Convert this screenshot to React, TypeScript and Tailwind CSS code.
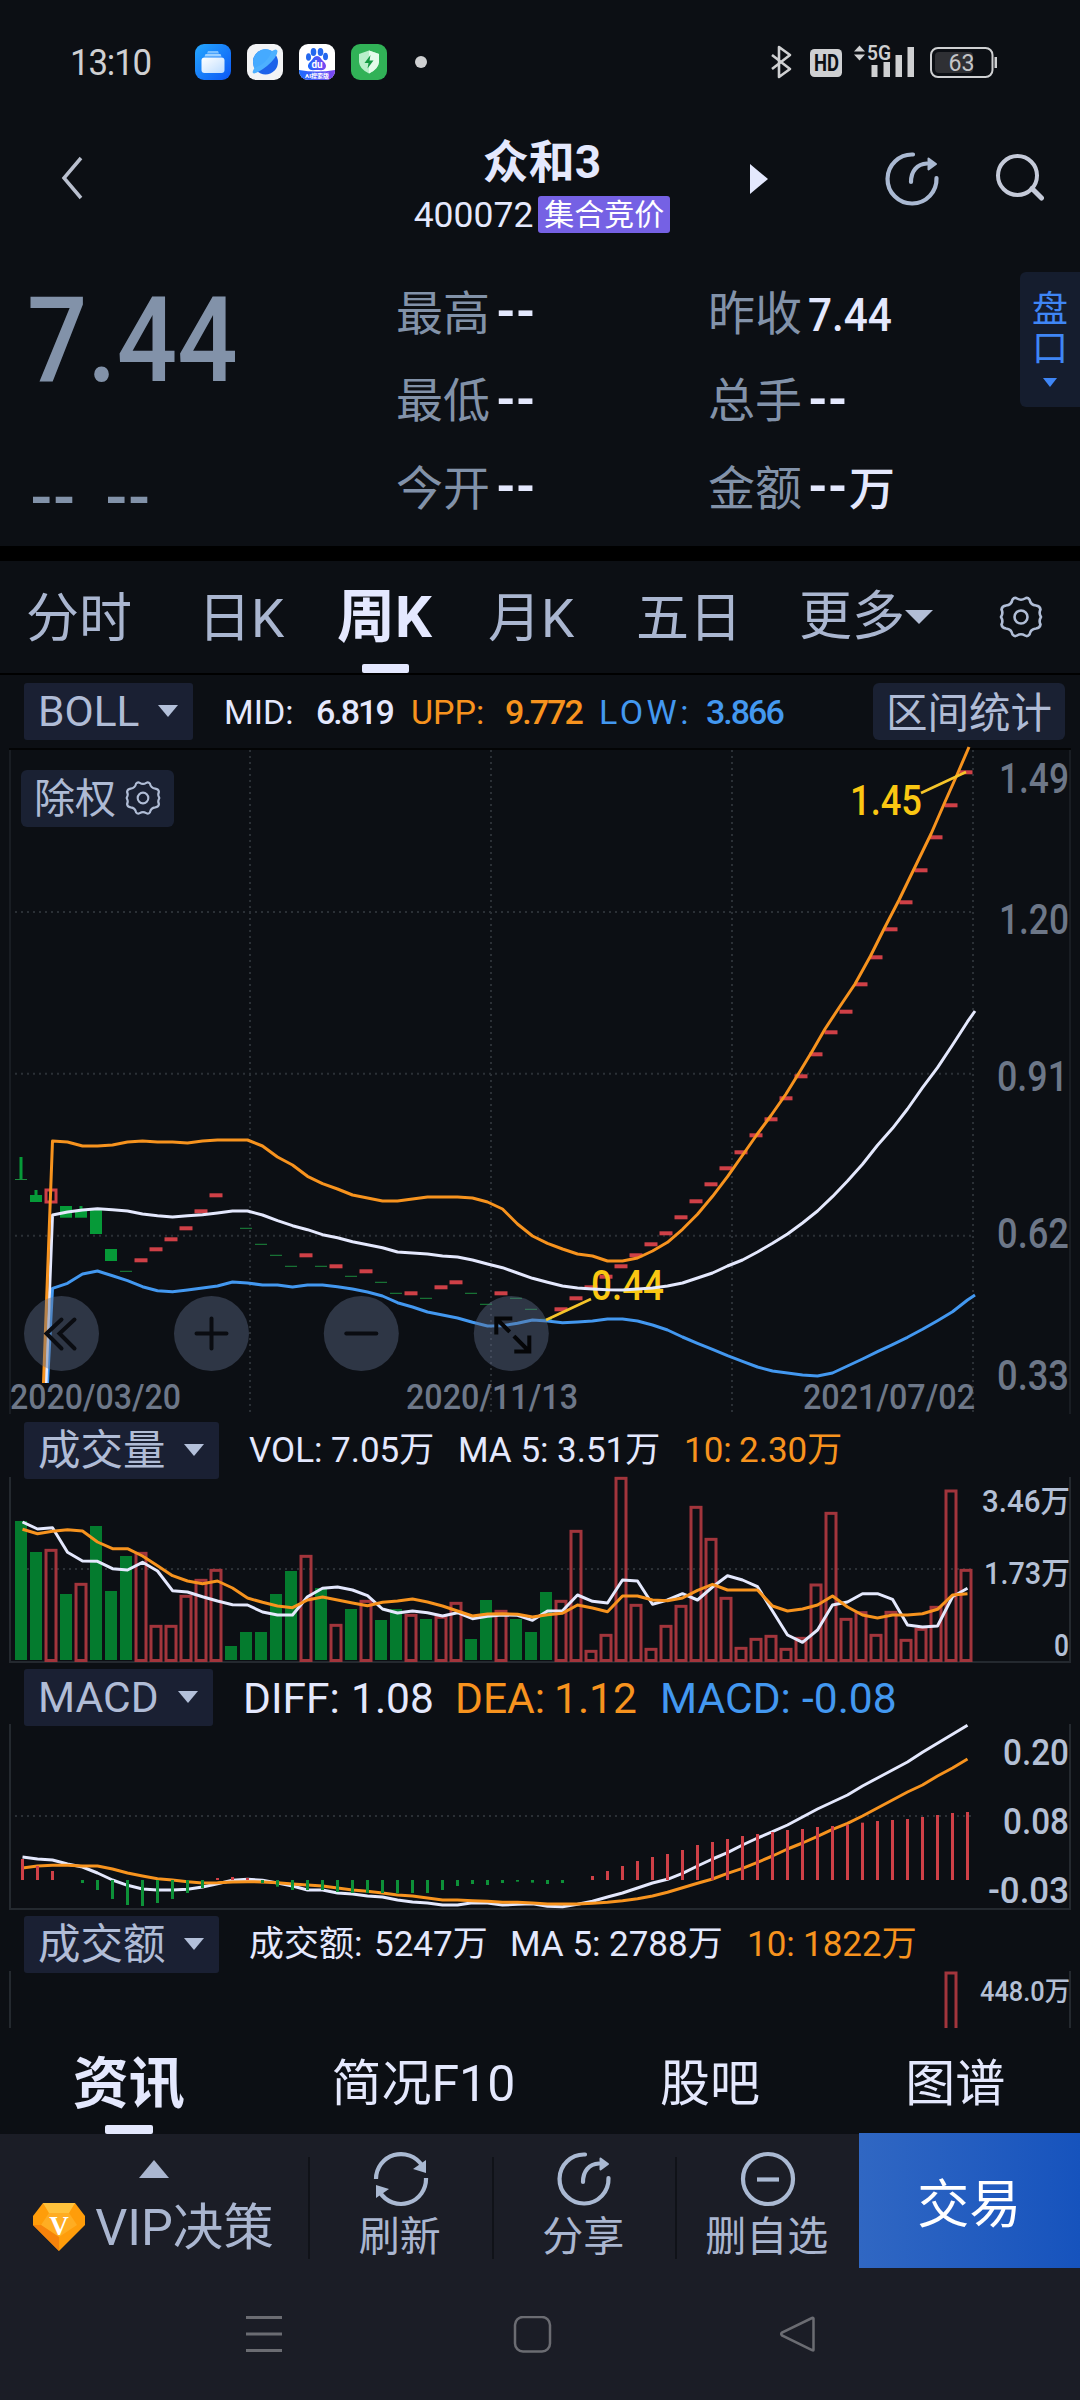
import type { ReactNode } from "react";

const STEP = 15;
const X0 = 21;

type Candle = { t: "r" | "g" | "wr" | "wg"; y: number; b?: number; w?: number };

// r / g are flat one-price weeks, wr / wg have a real body
const candles: (Candle | null)[] = [
  { t: "g", y: 1179.5, w: 1157 },
  { t: "wg", y: 1195, b: 1202, w: 1190 },
  { t: "wr", y: 1189, b: 1202 },
  { t: "wg", y: 1206, b: 1217.7 },
  { t: "wg", y: 1211, b: 1217.7, w: 1206 },
  { t: "wg", y: 1210, b: 1234 },
  { t: "wg", y: 1249, b: 1261 },
  { t: "g", y: 1271.3 },
  { t: "r", y: 1260.3 },
  { t: "r", y: 1249.3 },
  { t: "r", y: 1239.3 },
  { t: "r", y: 1228.3 },
  { t: "r", y: 1211.3 },
  { t: "r", y: 1195.3 },
  null,
  { t: "g", y: 1228.3 },
  { t: "g", y: 1244.3 },
  { t: "g", y: 1255.3 },
  { t: "g", y: 1266.3 },
  { t: "r", y: 1255.3 },
  { t: "g", y: 1266.3 },
  { t: "r", y: 1266.3 },
  { t: "g", y: 1276.3 },
  { t: "r", y: 1271.3 },
  { t: "g", y: 1282.3 },
  { t: "g", y: 1293.3 },
  { t: "r", y: 1293.3 },
  { t: "g", y: 1298.3 },
  { t: "r", y: 1287.3 },
  { t: "r", y: 1282.3 },
  { t: "g", y: 1293.3 },
  { t: "g", y: 1304.3 },
  { t: "r", y: 1293.3 },
  { t: "g", y: 1298.3 },
  { t: "g", y: 1309.3 },
  { t: "g", y: 1319.3 },
  ...[
    1309.3, 1298.3, 1287.3, 1276.7, 1266.3, 1255.3, 1244.3, 1233.3, 1217.3, 1201.3, 1184.3, 1168.3, 1152.3, 1135.3,
    1119.3, 1098.3, 1076.3, 1054.3, 1032.3, 1011.7, 984.3, 957.3, 929.3, 902.3, 870.3, 837.3, 805.3, 772.3,
  ].map((y) => ({ t: "r" as const, y })),
];

// Bollinger lines, thirds of a pixel below y = 1100
const upp = [
  123, 126, 138, 138, 135, 126, 123, 126, 126, 129, 123, 120, 120, 120, 138, 171, 195, 229, 251, 267, 285, 294, 303,
  303, 297, 291, 291, 291, 294, 306, 327, 372, 408, 430, 447, 462, 468, 483, 483, 474, 453, 427, 388, 343, 289, 230,
];
const mid = [
  345, 336, 330, 326, 329, 333, 342, 347, 351, 347, 344, 339, 333, 333, 345, 362, 377, 389, 404, 413, 425, 434, 443,
  456, 459, 462, 468, 471, 480, 492, 503, 519, 535, 547, 558, 564, 567, 569, 570, 567, 564, 558, 549, 534, 519, 498,
  480, 456, 430, 402, 369, 333, 290, 243, 193, 136, 85, 27, -37, -97, -165, -235,
];
const low = [
  565, 550, 522, 513, 527, 542, 560, 572, 575, 570, 564, 558, 546, 549, 555, 555, 561, 555, 555, 560, 567, 576, 588,
  608, 621, 636, 645, 654, 667, 678, 677, 670, 660, 663, 668, 666, 663, 657, 657, 663, 675, 690, 711, 730, 748, 767,
  784, 801, 813, 819, 825, 828, 819, 798, 777, 755, 734, 712, 688, 662, 635, 600,
];

const volumes =
  "333g 426g 418r 552g 520r 348g 543g 438g 427r 646r 646r 556r 508r 478r 708g 666g 666g 552g 483g 436r 534g 643r 597g 571r 630g 597g 613r 627g 619r 577r 687g 570g 601r 627g 666g 546g 571r 361r 721r 673r 202r 583r 715r 646r 586r 289r 385r 562r 712r 685r 676r 715r 682r 522r 307r 625r 605r 673r 604r 688r 655r 589r 240r 478r".split(
    " "
  );
const volMa5 = [
  336, 357, 353, 427, 453, 454, 476, 480, 457, 483, 542, 546, 560, 573, 584, 585, 606, 615, 615, 560, 535, 531, 540,
  557, 597, 609, 603, 608, 618, 608, 626, 619, 615, 616, 631, 603, 602, 555, 574, 579, 510, 513, 583, 570, 551, 570,
  531, 497, 510, 530, 603, 675, 697, 660, 585, 576, 551, 551, 568, 645, 651, 648, 560, 535,
];
const volMa10 = [
  358, 371, 364, 359, 363, 396, 416, 416, 438, 467, 497, 513, 521, 513, 534, 564, 577, 588, 593, 570, 561, 570, 579,
  587, 577, 573, 567, 576, 588, 603, 618, 612, 611, 613, 621, 614, 610, 585, 594, 605, 558, 558, 570, 572, 564, 541,
  523, 540, 540, 540, 588, 603, 597, 585, 558, 591, 615, 624, 615, 615, 611, 598, 555, 551,
];

const macdBars = [
  597, 618, 633, 660, 669, 690, 717, 735, 738, 729, 717, 699, 684, 654, 651, 654, 669, 680, 690, 690, 690, 696, 699,
  699, 699, 700, 699, 699, 690, 678, 672, 675, 669, 665, 668, 672, 669, 660, 648, 633, 618, 603, 591, 582, 570, 555,
  546, 537, 528, 522, 516, 510, 507, 501, 498, 494, 488, 483, 480, 477, 471, 465, 459, 456,
];
const diff = [
  591, 597, 600, 612, 621, 639, 660, 676, 687, 690, 690, 688, 681, 671, 661, 658, 661, 669, 678, 690, 690, 699, 702,
  708, 711, 720, 726, 729, 735, 735, 728, 729, 735, 733, 731, 739, 740, 733, 724, 711, 699, 684, 669, 658, 640, 618,
  597, 578, 555, 534, 515, 495, 471, 447, 426, 405, 378, 354, 330, 306, 277, 250, 223, 196,
];
const dea = [
  624, 618, 616, 616, 618, 618, 627, 639, 648, 656, 660, 665, 669, 668, 666, 665, 666, 668, 672, 675, 678, 684, 690,
  694, 699, 705, 708, 714, 720, 720, 722, 724, 727, 727, 729, 732, 732, 732, 730, 727, 722, 716, 708, 697, 683, 670,
  657, 640, 625, 607, 588, 567, 549, 529, 508, 490, 468, 444, 420, 396, 375, 348, 324, 297,
];

const line = (ys: number[], x0: number, base: number) =>
  ys.map((y, i) => `${x0 + i * STEP},${(base + y / 3).toFixed(1)}`).join(" ");

const RED = "#cf4047";
const GREEN = "#069a38";
const GRID = "#2b3036";
const WHITE = "#e4e8fd";
const ORANGE = "#f7931e";
const BLUE = "#4398f0";

const FONT = "'DIN Alternate', Roboto, 'Noto Sans CJK SC', sans-serif";

function Label({ x, x2, y, size, fill, children, weight = 500 }: {
  x: number; x2: number; y: number; size: number; fill: string; children: string; weight?: number;
}) {
  return (
    <text x={x} y={y} fontSize={size} fill={fill} fontWeight={weight} fontFamily={FONT} textLength={x2 - x} lengthAdjust="spacingAndGlyphs">
      {children}
    </text>
  );
}

function Caret({ className = "" }: { className?: string }) {
  return (
    <svg viewBox="0 0 20 12" className={`w-[20px] h-[12px] shrink-0 ${className}`}>
      <path d="M0 0h20L10 12z" fill="#b3c0da" />
    </svg>
  );
}

function Gear({ className }: { className: string }) {
  return (
    <svg viewBox="0 0 44 44" className={className} fill="none" stroke="#b0bdd6" strokeWidth="2.6" strokeLinejoin="round">
      <path d="M13.500 4.500Q15.500 2 18 3.500Q22 6 26 3.500Q28.500 2 30.500 4.500Q31.500 10 37 10.500Q41 11 41.500 14.500Q39.500 18 42 22Q39.500 26 41.500 29.500Q41 33 37 33.500Q31.500 34 30.500 39.500Q28.500 42 26 40.500Q22 38 18 40.500Q15.500 42 13.500 39.500Q12.500 34 7 33.500Q3 33 2.500 29.500Q4.500 26 2 22Q4.500 18 2.500 14.500Q3 11 7 10.500Q12.500 10 13.500 4.500Z" />
      <circle cx="22" cy="22" r="6.500" />
    </svg>
  );
}

function ShareIcon() {
  return (
    <svg viewBox="0 0 56 56" className="w-14 h-14" fill="none" stroke="#aab9d2" strokeWidth="4.200" strokeLinecap="round">
      <path d="M29 3.500A24.500 24.500 0 1 0 52.500 27" />
      <path d="M27 31C27 20 33 13 43 12.500" />
      <path d="M44.500 7.500L52 13L44.500 18.500z" fill="#aab9d2" strokeWidth="2" strokeLinejoin="round" />
    </svg>
  );
}

function StatusBar() {
  return (
    <div className="h-[124px] flex items-center pl-[70px] pr-[83px] text-[#cfd0d2]">
      <span className="w-[125px]">
        <span className="inline-block text-[37px] tracking-[-1.2px] leading-none mt-[2px] origin-left scale-x-[.94]">13:10</span>
      </span>
      <div className="flex gap-4 items-center">
        <svg viewBox="0 0 36 36" className="w-9 h-9">
          <defs>
            <linearGradient id="files" x1="0" y1="0" x2="1" y2="1"><stop stopColor="#25a8ff" /><stop offset="1" stopColor="#0b56f5" /></linearGradient>
            <linearGradient id="sheet" x1="0" y1="0" x2="1" y2="1"><stop stopColor="#fff" /><stop offset="1" stopColor="#bcdcff" /></linearGradient>
          </defs>
          <rect width="36" height="36" rx="9" fill="url(#files)" />
          <path d="M13 7h10l1 2.500H12z" fill="#7cc0ff" />
          <path d="M10.500 10h15l1 2.500h-17z" fill="#9cd0ff" />
          <rect x="6.500" y="13.500" width="23" height="15.500" rx="3" fill="url(#sheet)" />
        </svg>
        <svg viewBox="0 0 36 36" className="w-9 h-9">
          <rect width="36" height="36" rx="9" fill="#f2f3f5" />
          <circle cx="18.500" cy="18" r="12.500" fill="#1d62ea" />
          <path d="M28 9.500A12.500 12.500 0 0 0 6 18Q6 23 8.500 26Q22 22 28 9.500z" fill="#45aaff" />
          <path d="M25 7Q29.500 4 30.500 7Q30.500 13 20 22Q11 29 7 29.500Q4 29 7.500 24Q20 20 25 7z" fill="#4db0ff" />
        </svg>
        <svg viewBox="0 0 36 36" className="w-9 h-9">
          <defs>
            <linearGradient id="du"><stop stopColor="#1b6bff" /><stop offset="1" stopColor="#7d45f0" /></linearGradient>
            <clipPath id="duClip"><rect width="36" height="36" rx="9" /></clipPath>
          </defs>
          <g clipPath="url(#duClip)">
            <rect width="36" height="36" fill="#fff" />
            <g fill="#2468ee">
              <ellipse cx="14.500" cy="8" rx="2.800" ry="4" /><ellipse cx="21.500" cy="8" rx="2.800" ry="4" />
              <ellipse cx="9.500" cy="13" rx="2.500" ry="3.800" /><ellipse cx="26.500" cy="12.500" rx="2.500" ry="3.800" />
            </g>
            <path d="M18 12c3 0 4 3 6 5s4 4 2.500 7-5 2-8.500 2-7 1-8.500-2 .5-5 2.500-7 3-5 6-5z" fill="url(#du)" />
            <path d="M0 26Q18 29 36 26V36H0z" fill="url(#du)" />
            <text x="18" y="23.500" fontSize="10" fontWeight="700" fill="#fff" textAnchor="middle" fontFamily={FONT}>du</text>
            <text x="18" y="34" fontSize="6" fontWeight="700" fill="#fff" textAnchor="middle" fontFamily={FONT}>AI搜索版</text>
          </g>
        </svg>
        <svg viewBox="0 0 36 36" className="w-9 h-9">
          <rect width="36" height="36" rx="9" fill="#31b257" />
          <path d="M18 6.500L28 10V18Q27.500 25 18 29.500Q8.500 25 8 18V10z" fill="#b9f0cb" />
          <path d="M18 6.500L28 10V18Q27.500 25 18 29.500z" fill="#e3fbea" />
          <path d="M19.500 11L13.500 19H17.500L16.500 24.500L22.500 16.500H18.500z" fill="#139a42" />
        </svg>
      </div>
      <i className="ml-7 size-3 rounded-full bg-[#cfd0d2]" />
      <svg viewBox="770 44 228 36" className="ml-auto w-[228px] h-[36px] overflow-visible" fill="none">
        <path d="M773 55L791 69L780 77V47L791 55L773 69" stroke="#cfd0d2" strokeWidth="2.600" strokeLinejoin="round" />
        <rect x="811" y="49" width="32" height="28" rx="4.500" fill="#cfd0d2" />
        <text x="815" y="71" fontSize="23" fontWeight="700" fill="#0c0f14" fontFamily={FONT} textLength="25" lengthAdjust="spacingAndGlyphs">HD</text>
        <path d="M855 51.500l5.500-6 5.500 6zM855 54.500l5.500 6 5.500-6z" fill="#cfd0d2" />
        <text x="868" y="60" fontSize="21" fontWeight="600" fill="#cfd0d2" fontFamily={FONT} textLength="24" lengthAdjust="spacingAndGlyphs">5G</text>
        <path d="M872.500 65h6v12h-6zM884.500 62h6.500v15h-6.500zM896.500 55h6.500v22h-6.500zM908.500 47h6.500v30h-6.500z" fill="#cfd0d2" />
        <rect x="932" y="48" width="61.500" height="29" rx="7" stroke="#cfd0d2" strokeWidth="2" />
        <rect x="936" y="52" width="38" height="21" rx="4" fill="#2f3034" />
        <rect x="995.500" y="57" width="2.500" height="11" fill="#cfd0d2" />
        <text x="949.500" y="71" fontSize="24" fill="#c4c5c7" fontFamily={FONT} textLength="26" lengthAdjust="spacingAndGlyphs">63</text>
      </svg>
    </div>
  );
}

function Header() {
  return (
    <div className="h-[136px] flex items-start">
      <svg viewBox="0 0 22 44" className="w-[22px] h-[44px] ml-[61px] mt-8" fill="none" stroke="#b9bfce" strokeWidth="3.500">
        <path d="M20 2L3 22L20 42" />
      </svg>
      <div className="ml-[329px] w-[260px] mt-[14px] flex flex-col items-center text-[#e4e8fd]">
        <h1 className="text-[46px] leading-[48px] font-bold">众和3</h1>
        <div className="flex items-center gap-[5px] mt-[10px]">
          <span className="text-[35.500px] leading-[36px]">400072</span>
          <span className="bg-[#7561e4] rounded-[3px] w-[132px] h-[37px] text-center text-[30px] leading-[37px] text-white">集合竞价</span>
        </div>
      </div>
      <svg viewBox="0 0 18 30" className="w-[18px] h-[30px] ml-[78px] mt-10"><path d="M0 0L18 15L0 30z" fill="#e4e8fd" /></svg>
      <div className="ml-[116px] mt-[27px]"><ShareIcon /></div>
      <svg viewBox="0 0 50 50" className="w-[50px] h-[50px] ml-[54px] mt-7" fill="none" stroke="#c5cad9" strokeWidth="4">
        <circle cx="23.500" cy="23.500" r="19.500" /><path d="M38 36.500L47.500 46" strokeWidth="5" strokeLinecap="round" />
      </svg>
    </div>
  );
}

const quotes = [
  ["最高", "--", "昨收", "7.44"],
  ["最低", "--", "总手", "--"],
  ["今开", "--", "金额", "--万"],
];

function Value({ v }: { v: string }) {
  const dash = v.startsWith("--");
  return (
    <span className="ml-[6px] flex items-center font-medium text-[#e4e8fd]">
      {dash && <b className="w-[41px] -mt-[3px] text-[50px] leading-none font-bold">--</b>}
      {dash && <span className="text-[46px] leading-none">{v.slice(2)}</span>}
      {!dash && <span className="inline-block text-[47px] leading-none mt-[2px] origin-left scale-x-[.9]">{v}</span>}
    </span>
  );
}

function Quote() {
  return (
    <div className="h-[286px] flex">
      <div className="w-[396px] pl-[27px] text-[#8292a9]">
        <div className="mt-[22px] text-[118px] leading-[118px] font-medium origin-left scale-x-[.9] w-[260px]">7.44</div>
        <div className="mt-[60px] ml-[3px] text-[62px] leading-[76px] font-semibold flex gap-[29px]">
          <span className="w-[46px]">--</span>
          <span className="w-[46px]">--</span>
        </div>
      </div>
      <div className="w-[624px] pt-[10px] whitespace-nowrap">
        {quotes.map((q) => (
          <div key={q[0]} className="h-[87.500px] grid grid-cols-[312px_312px] items-center text-[47px] text-[#8292a9]">
            <div className="flex items-center">{q[0]}<Value v={q[1]} /></div>
            <div className="flex items-center">{q[2]}<Value v={q[3]} /></div>
          </div>
        ))}
      </div>
      <div className="mt-3 w-[60px] h-[135px] rounded-l-md bg-[#151d2e] flex flex-col items-center pt-[19px] text-[#3f86f5] text-[36px] leading-[39px]">
        <span>盘</span>
        <span>口</span>
        <svg viewBox="0 0 14 9" className="w-[14px] h-[9px] mt-[9px]"><path d="M0 0h14L7 9z" fill="#3f86f5" /></svg>
      </div>
    </div>
  );
}

const periods = [
  { name: "分时", pos: "w-[172px]" },
  { name: "日K", pos: "w-[139px]" },
  { name: "周K", pos: "w-[151px]", active: true },
  { name: "月K", pos: "w-[148px]" },
  { name: "五日", pos: "w-[163px]" },
];

function Periods() {
  return (
    <div className="h-[114px] border-b-2 border-black flex pl-[26px] text-[53px] leading-[117px] text-[#aab6d0]">
      {periods.map((p) => (
        <div key={p.name} className={`${p.pos} h-[112px] relative whitespace-nowrap`}>
          {p.active ? <b className="text-[#e4e8ff] text-[58px] leading-[112px]">{p.name}</b> : p.name}
          {p.active && <i className="absolute left-[25px] bottom-0 w-[47px] h-[9px] rounded-[2px] bg-[#e4e8ff]" />}
        </div>
      ))}
      <div className="h-[112px] flex items-center whitespace-nowrap">
        更多
        <svg viewBox="0 0 28 14" className="w-[28px] h-[14px]"><path d="M0 0h28L14 14z" fill="#b3bed6" /></svg>
      </div>
      <Gear className="w-[44px] h-[44px] ml-[66px] mt-[34px]" />
    </div>
  );
}

function Picker({ name, className }: { name: string; className: string }) {
  return (
    <div className={`h-[57px] rounded-[3px] bg-[#1a2033] flex items-center justify-between pl-[14px] pr-[15px] text-[42.500px] leading-[61px] text-[#b0bcd6] ${className}`}>
      <span>{name}</span>
      <Caret className="-mt-[1px]" />
    </div>
  );
}

type Item = { text: string; cls: string };

function Legend({ items, className = "" }: { items: Item[]; className?: string }) {
  return (
    <div className={`flex whitespace-nowrap pt-[2px] ${className}`}>
      {items.map((it, i) => (
        <span key={i} className={`shrink-0 ${it.cls}`}>{it.text}</span>
      ))}
    </div>
  );
}

function RoundButton({ x, children }: { x: number; children: ReactNode }) {
  return (
    <g transform={`translate(${x} 1333.500)`} fill="none" stroke="#0a0c11" strokeWidth="4" strokeLinecap="round">
      <circle r="37.500" fill="#5f6e8b" fillOpacity=".42" stroke="none" />
      {children}
    </g>
  );
}

function PriceChart() {
  return (
    <svg viewBox="0 748 1080 674" className="block w-[1080px] h-[674px] overflow-visible">
      <path d="M9 749H1071" stroke="#030405" strokeWidth="2" />
      <path d="M10 750V1414M1070 750V1414" stroke="#191d23" strokeWidth="2" />
      <g stroke={GRID} strokeWidth="2">
        <path d="M15 912H973M15 1073.700H973M15 1235.700H973" strokeDasharray="2 4" />
        <path d="M250 750V1412M491 750V1412M732 750V1412M973 750V1412" strokeDasharray="2 4" />
      </g>
      {candles.map((c, i) => {
        if (!c) return null;
        const x = X0 + i * STEP;
        const wick = c.w ? <path d={`M${x} ${c.w}V${c.y}`} stroke={GREEN} strokeWidth="3" /> : null;
        if (c.t === "r") return <rect key={i} x={x - 6.5} y={c.y - 2} width="13" height="4" fill={RED} />;
        if (c.t === "g") return <g key={i}>{wick}<rect x={x - 6} y={c.y - 0.5} width="12" height="1" fill="#1c8a3e" /></g>;
        if (c.t === "wr") return <rect key={i} x={x - 5} y={c.y + 1} width="10" height={c.b! - c.y - 1} fill="none" stroke={RED} strokeWidth="3" />;
        return <g key={i}>{wick}<rect x={x - 6} y={c.y} width="12" height={c.b! - c.y} fill={GREEN} /></g>;
      })}
      <Label x={850} x2={922} y={815} size={42} fill="#fac712">1.45</Label>
      <Label x={591} x2={664} y={1300} size={42} fill="#fac712">0.44</Label>
      <g fill="none" strokeWidth="3" strokeLinejoin="round">
        <polyline stroke={BLUE} points={`47.500,1383 ${line(low, 52.5, 1100)} 975,1295`} />
        <polyline stroke={WHITE} points={`46,1383 ${line(mid, 52.5, 1100)} 975,1011`} />
        <polyline stroke={ORANGE} points={`43.500,1383 ${line(upp, 52.5, 1100)} 742,1156 757,1134.500 771,1115.500 786,1094 799,1073 812,1051.500 825,1029 839.500,1007 855,984 870.500,956 884.500,928 899,900 914.500,868 931,834 944.500,803 956.500,776 969,747`} />
        <path d="M921 793L966 772M546 1320L591 1299" stroke="#f5c52a" strokeWidth="2.700" />
      </g>
      <Label x={999} x2={1069} y={793} size={42} fill="#6d7788">1.49</Label>
      <Label x={999} x2={1069} y={934} size={42} fill="#6d7788">1.20</Label>
      <Label x={997} x2={1068} y={1091} size={42} fill="#6d7788">0.91</Label>
      <Label x={997} x2={1069} y={1248} size={42} fill="#6d7788">0.62</Label>
      <Label x={997} x2={1069} y={1390} size={42} fill="#6d7788">0.33</Label>
      <Label x={10} x2={181} y={1409} size={35} fill="#6d7788">2020/03/20</Label>
      <Label x={406} x2={578} y={1409} size={35} fill="#6d7788">2020/11/13</Label>
      <Label x={803} x2={975} y={1409} size={35} fill="#6d7788">2021/07/02</Label>
      <RoundButton x={61.5}><path d="M0 -14L-15 0L0 15M13 -14L-2 0L13 15" /></RoundButton>
      <RoundButton x={211.5}><path d="M-15 0H15M0 -15V15" /></RoundButton>
      <RoundButton x={361.3}><path d="M-15 0H15" /></RoundButton>
      <RoundButton x={511.3}>
        <path d="M-15 -1V-15H-1M-14 -14L-3 -3M4 4L17 17M5 18H18V4" stroke="#050608" strokeLinecap="square" />
      </RoundButton>
    </svg>
  );
}

function VolumeChart() {
  return (
    <svg viewBox="0 1479 1080 190" className="block w-[1080px] h-[190px] overflow-visible">
      <path d="M10 1477V1662H1070V1477" fill="none" stroke="#24292f" strokeWidth="2" />
      <path d="M15 1569H973" stroke={GRID} strokeWidth="2" strokeDasharray="2 4" />
      {volumes.map((v, i) => {
        const top = 1410 + parseInt(v) / 3;
        const x = X0 + i * STEP;
        return v.endsWith("g") ? (
          <rect key={i} x={x - 6} y={top} width="12" height={1660 - top} fill="#047b2e" />
        ) : (
          <rect key={i} x={x - 5} y={top + 1} width="10" height={1659.5 - top} fill="none" stroke="#a2353c" strokeWidth="3" />
        );
      })}
      <g fill="none" strokeWidth="3" strokeLinejoin="round">
        <polyline stroke={WHITE} points={line(volMa5, 22.5, 1410)} />
        <polyline stroke={ORANGE} points={line(volMa10, 22.5, 1410)} />
      </g>
      <Label x={982} x2={1070} y={1512} size={31} fill="#b4c0d6">3.46万</Label>
      <Label x={984} x2={1070} y={1584} size={31} fill="#b4c0d6">1.73万</Label>
      <Label x={1054} x2={1069} y={1656} size={31} fill="#b4c0d6">0</Label>
    </svg>
  );
}

function MacdChart() {
  return (
    <svg viewBox="0 1726 1080 190" className="block w-[1080px] h-[190px] overflow-visible">
      <path d="M10 1724V1909H1070V1724" fill="none" stroke="#24292f" strokeWidth="2" />
      <path d="M15 1816H973" stroke={GRID} strokeWidth="2" strokeDasharray="2 4" />
      <g fill="none" strokeWidth="3" strokeLinejoin="round">
        <polyline stroke={WHITE} points={line(diff, 22.5, 1660)} />
        <polyline stroke={ORANGE} points={line(dea, 22.5, 1660)} />
      </g>
      {macdBars.map((b, i) => (
        <path key={i} d={`M${22.5 + i * STEP} 1880V${1660 + b / 3}`} stroke={b < 660 ? RED : "#0d9138"} strokeWidth="3" />
      ))}
      <Label x={1003} x2={1069} y={1765} size={37} fill="#b4c0d6">0.20</Label>
      <Label x={1003} x2={1069} y={1834} size={37} fill="#b4c0d6">0.08</Label>
      <Label x={988} x2={1069} y={1903} size={37} fill="#b4c0d6">-0.03</Label>
    </svg>
  );
}

function AmountChart() {
  return (
    <svg viewBox="0 1973 1080 55" className="block w-[1080px] h-[55px] overflow-visible">
      <path d="M10 1971V2028M1070 1971V2028" stroke="#24292f" strokeWidth="2" />
      <path d="M946 2028V1973H956V2028" fill="none" stroke="#a2353c" strokeWidth="3" />
      <Label x={980} x2={1070} y={2001} size={27} fill="#b4c0d6">448.0万</Label>
    </svg>
  );
}

function Indicators() {
  return (
    <>
      <div className="h-[73px] flex items-center pl-6 pr-[15px]">
        <Picker name="BOLL" className="w-[169px]" />
        <Legend
          className="ml-[31px] flex-1 text-[34px] leading-[59px]"
          items={[
            { text: "MID:", cls: "w-[92px] text-[#e4e8fd]" },
            { text: "6.819", cls: "w-[95px] text-[#e4e8fd] font-medium tracking-[-2px]" },
            { text: "UPP:", cls: "w-[94px] text-[#f7931e]" },
            { text: "9.772", cls: "w-[94px] text-[#f7931e] font-medium tracking-[-2px]" },
            { text: "LOW:", cls: "w-[107px] text-[#4398f0] tracking-[3.500px]" },
            { text: "3.866", cls: "text-[#4398f0] font-medium tracking-[-2px]" },
          ]}
        />
        <div className="w-[192px] h-[57px] rounded-md bg-[#1a2133] text-center text-[41.500px] leading-[61px] text-[#b0bcd6]">区间统计</div>
      </div>
      <div className="relative">
        <PriceChart />
        <div className="absolute left-[21px] top-[22px] w-[153px] h-[57px] rounded-md bg-[#1a2133] flex items-center pl-[13px] text-[41px] leading-[62px] text-[#aebad4]">
          除权
          <Gear className="w-[36px] h-[36px] ml-[9px] -mt-[2px]" />
        </div>
      </div>
      <div className="h-[57px] flex items-center pl-6">
        <Picker name="成交量" className="w-[195px]" />
        <Legend
          className="ml-[30px] text-[35px] text-[#e4e8fd]"
          items={[
            { text: "VOL:", cls: "w-[82px]" },
            { text: "7.05万", cls: "w-[127px]" },
            { text: "MA 5:", cls: "w-[99px]" },
            { text: "3.51万", cls: "w-[127px]" },
            { text: "10:", cls: "w-[55px] text-[#f7931e]" },
            { text: "2.30万", cls: "text-[#f7931e]" },
          ]}
        />
      </div>
      <VolumeChart />
      <div className="h-[57px] flex items-center pl-6">
        <Picker name="MACD" className="w-[189px]" />
        <Legend
          className="ml-[30px] text-[42.500px] text-[#e4e8fd]"
          items={[
            { text: "DIFF:", cls: "w-[108px]" },
            { text: "1.08", cls: "w-[104px]" },
            { text: "DEA:", cls: "w-[99px] text-[#f7931e]" },
            { text: "1.12", cls: "w-[106px] text-[#f7931e]" },
            { text: "MACD:", cls: "w-[142px] text-[#4398f0]" },
            { text: "-0.08", cls: "text-[#4398f0]" },
          ]}
        />
      </div>
      <MacdChart />
      <div className="h-[57px] flex items-center pl-6">
        <Picker name="成交额" className="w-[195px]" />
        <Legend
          className="ml-[30px] text-[35px] text-[#e4e8fd]"
          items={[
            { text: "成交额:", cls: "w-[125px]" },
            { text: "5247万", cls: "w-[136px]" },
            { text: "MA 5:", cls: "w-[99px]" },
            { text: "2788万", cls: "w-[138px]" },
            { text: "10:", cls: "w-[56px] text-[#f7931e]" },
            { text: "1822万", cls: "text-[#f7931e]" },
          ]}
        />
      </div>
      <AmountChart />
    </>
  );
}

function InfoTabs() {
  return (
    <div className="h-[106px] flex text-[50px] leading-[112px] text-[#e4e8fd] text-center whitespace-nowrap">
      <div className="w-[258px] h-[106px] relative text-[56px]">
        <b>资讯</b>
        <i className="absolute left-[105px] bottom-0 w-[48px] h-[9px] rounded-[2px] bg-[#e4e8fd]" />
      </div>
      <div className="w-[333px]">简况F10</div>
      <div className="w-[242px]">股吧</div>
      <div className="w-[250px]">图谱</div>
    </div>
  );
}

function Action({ icon, label }: { icon: ReactNode; label: string }) {
  return (
    <div className="w-[183.500px] h-[102px] mt-[23px] border-l-2 border-[#101218] flex flex-col items-center">
      <div className="-mt-[6px]">{icon}</div>
      <span className="text-[41px] leading-[54px] mt-[3px] -ml-[2px]">{label}</span>
    </div>
  );
}

function BottomBar() {
  return (
    <div className="h-[134px] flex bg-[#1b1d26] text-[#aab6d0] whitespace-nowrap">
      <div className="w-[308px] flex flex-col items-center pt-[26px]">
        <svg viewBox="0 0 30 18" className="w-[30px] h-[18px]"><path d="M15 0L30 18H0z" fill="#aab6d0" /></svg>
        <div className="flex items-center mt-[18px] gap-[10px] -ml-[1px]">
          <svg viewBox="0 0 52 48" className="w-[52px] h-[48px]">
            <path d="M10 0H42L52 13V22L26 48L0 22V13z" fill="#ff9d0a" />
            <path d="M10 0H42L36 10H16z" fill="#ffc23c" />
            <path d="M16 10H36L44 22L26 34L8 22z" fill="#ffad22" />
            <path d="M26 34V48L0 22H8z" fill="#f7830b" />
            <text x="26" y="32" fontSize="27" fontWeight="700" fill="#fff" textAnchor="middle" fontFamily="'Liberation Serif', serif">V</text>
          </svg>
          <span className="text-[50.500px] leading-[58px] mt-[3px]">VIP决策</span>
        </div>
      </div>
      <Action
        label="刷新"
        icon={
          <svg viewBox="0 0 56 56" className="w-14 h-14" fill="none" stroke="#aab9d2" strokeWidth="4.200">
            <path d="M3 28A25 25 0 0 1 49 14.500M53 27A25 25 0 0 1 7 41.500" />
            <path d="M53 9V22L40 18zM3 47V34L16 38z" fill="#aab9d2" stroke="none" />
          </svg>
        }
      />
      <Action label="分享" icon={<ShareIcon />} />
      <Action
        label="删自选"
        icon={
          <svg viewBox="0 0 56 56" className="w-14 h-14" fill="none" stroke="#aab9d2" strokeWidth="4.200">
            <circle cx="28" cy="28" r="25" />
            <path d="M17 28.500H39" />
          </svg>
        }
      />
      <div className="flex-1 -mt-px bg-linear-to-r from-[#3067c3] to-[#1653bd] text-white text-center text-[52px] leading-[146px]">交易</div>
    </div>
  );
}

export default function App() {
  return (
    <div className="w-[1080px] h-[2400px] overflow-hidden bg-[#0c0f14] font-[Roboto,'Noto_Sans_CJK_SC',sans-serif]">
      <StatusBar />
      <Header />
      <Quote />
      <div className="h-[15px] bg-black" />
      <Periods />
      <Indicators />
      <InfoTabs />
      <BottomBar />
      <div className="h-[132px] bg-[#1b1d26] pt-[48px]">
        <svg viewBox="0 2316 1080 37" className="block w-[1080px] h-[37px]" fill="none" stroke="#6b6c72" strokeWidth="2.500">
          <path d="M246 2317.500H282M246 2334H282M246 2350.500H282" strokeWidth="3" />
          <rect x="515" y="2317" width="35" height="34.500" rx="8" />
          <path d="M813.500 2318.500V2350Q813.500 2351 812 2350L782 2335.500Q780.500 2334 782 2332.500L812 2318Q813.500 2317.500 813.500 2318.500z" />
        </svg>
      </div>
    </div>
  );
}
